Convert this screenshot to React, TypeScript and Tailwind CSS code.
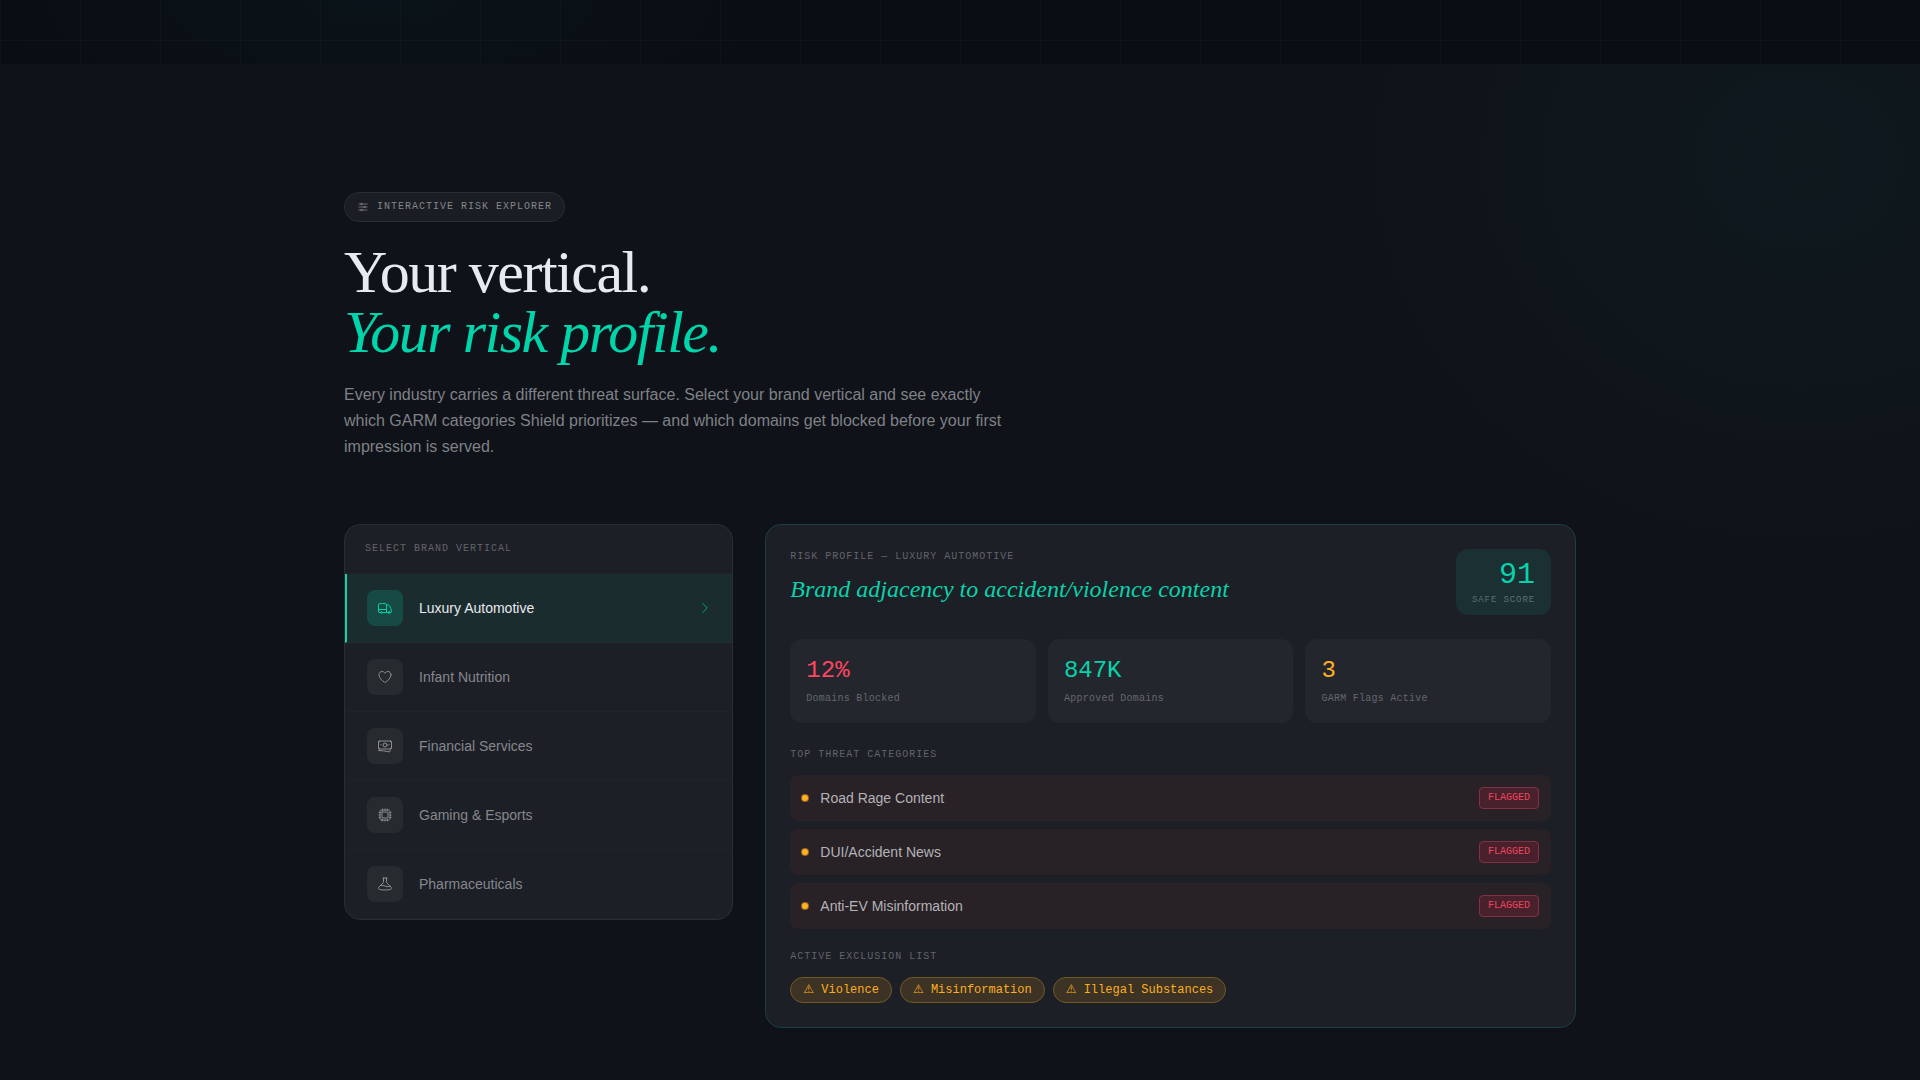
import { useState } from 'react'
import type { ComponentType, SVGProps } from 'react'
import {
    HiOutlineAdjustmentsHorizontal,
    HiOutlineBanknotes,
    HiOutlineBeaker,
    HiOutlineChevronRight,
    HiOutlineCpuChip,
    HiOutlineHeart,
    HiOutlineTruck
} from 'react-icons/hi2'

type Vertical = {
    name: string
    icon: ComponentType<SVGProps<SVGSVGElement>>
    headline: string
    score: number
    blocked: string
    approved: string
    threats: string[]
    exclusions: string[]
}

const verticals: Vertical[] = [
    {
        name: 'Luxury Automotive',
        icon: HiOutlineTruck,
        headline: 'Brand adjacency to accident/violence content',
        score: 91,
        blocked: '12%',
        approved: '847K',
        threats: ['Road Rage Content', 'DUI/Accident News', 'Anti-EV Misinformation'],
        exclusions: ['Violence', 'Misinformation', 'Illegal Substances']
    },
    {
        name: 'Infant Nutrition',
        icon: HiOutlineHeart,
        headline: 'Health misinformation near parenting content',
        score: 96,
        blocked: '18%',
        approved: '612K',
        threats: ['Anti-Vaccine Content', 'Unsafe Feeding Advice', 'Product Recall Rumors'],
        exclusions: ['Misinformation', 'Adult Content', 'Violence']
    },
    {
        name: 'Financial Services',
        icon: HiOutlineBanknotes,
        headline: 'Placement beside scams and fraud schemes',
        score: 93,
        blocked: '15%',
        approved: '734K',
        threats: ['Crypto Scam Content', 'Get-Rich-Quick Schemes', 'Bank Run Rumors'],
        exclusions: ['Spam', 'Misinformation', 'Piracy']
    },
    {
        name: 'Gaming & Esports',
        icon: HiOutlineCpuChip,
        headline: 'Exposure to toxic community content',
        score: 87,
        blocked: '21%',
        approved: '568K',
        threats: ['Hate Speech Streams', 'Cheat Marketplaces', 'Illegal Gambling'],
        exclusions: ['Hate Speech', 'Piracy', 'Obscenity']
    },
    {
        name: 'Pharmaceuticals',
        icon: HiOutlineBeaker,
        headline: 'Adjacency to unverified medical claims',
        score: 94,
        blocked: '16%',
        approved: '693K',
        threats: ['Miracle Cure Content', 'Drug Abuse News', 'Counterfeit Pharmacies'],
        exclusions: ['Illegal Substances', 'Misinformation', 'Spam']
    }
]

const mono = "font-['Liberation_Mono','DejaVu_Sans',monospace]"
const serif = "font-['Liberation_Serif',serif]"

const SectionLabel = ({ children }: { children: React.ReactNode }) => (
    <h3 className={`${mono} text-[10px] leading-4 tracking-[0.1em] uppercase text-[#62646a]`}>{children}</h3>
)

const Stat = ({ value, label, color }: { value: string; label: string; color: string }) => (
    <div className="rounded-xl bg-[#23262d] p-4">
        <div className={`${mono} text-2xl ${color}`}>{value}</div>
        <div className={`${mono} mt-1 text-[10px] leading-4 tracking-wide text-[#65676c]`}>{label}</div>
    </div>
)

const VerticalRow = ({ item, active, onSelect }: { item: Vertical; active: boolean; onSelect: () => void }) => {
    const Icon = item.icon
    return (
        <button
            onClick={onSelect}
            aria-pressed={active}
            className={`flex w-full items-center gap-4 border-b border-l-2 border-b-white/2 px-5 py-4 text-left ${active ? 'border-l-[#1fcda8] bg-[#1b2c2f]' : 'border-l-transparent'}`}
        >
            <span className={`flex size-9 shrink-0 items-center justify-center rounded-lg ${active ? 'bg-[#174a44] text-[#00d4aa]' : 'bg-[#272a2f] text-[#8b8d91]'}`}>
                <Icon className="size-4" />
            </span>
            <span className={`flex-1 text-sm ${active ? 'text-[#e8eaf0]' : 'text-[#85878c]'}`}>{item.name}</span>
            {active && <HiOutlineChevronRight className="size-3.5 text-[#00d4aa]/80" />}
        </button>
    )
}

const RiskPanel = ({ item }: { item: Vertical }) => (
    <div className="rounded-2xl border border-[#1b4043] bg-[#1c1f26] p-6 lg:col-span-8">
        <div className="mb-6 flex items-start justify-between gap-4">
            <div>
                <SectionLabel>Risk Profile — {item.name}</SectionLabel>
                <p className={`${serif} mt-2 text-2xl italic text-[#0bd2aa]`}>{item.headline}</p>
            </div>
            <div className="shrink-0 rounded-xl bg-[#1a3032] px-4 py-2 text-right">
                <div className={`${mono} text-3xl text-[#08d2a9]`}>{item.score}</div>
                <div className={`${mono} text-[9px] leading-[14px] tracking-[0.1em] uppercase text-[#5d7071]`}>Safe Score</div>
            </div>
        </div>

        <div className="mb-6 grid grid-cols-3 gap-3">
            <Stat value={item.blocked} label="Domains Blocked" color="text-[#ff4560]" />
            <Stat value={item.approved} label="Approved Domains" color="text-[#08d2a9]" />
            <Stat value={String(item.exclusions.length)} label="GARM Flags Active" color="text-[#ffb020]" />
        </div>

        <SectionLabel>Top Threat Categories</SectionLabel>
        <ul className="mt-3 mb-5 flex flex-col gap-2">
            {item.threats.map(threat => (
                <li key={threat} className="flex items-center gap-3 rounded-lg bg-[#282126] p-3">
                    <span className="size-1.5 rounded-full bg-[#ffb020] ring-1 ring-[#ffb020]/50" />
                    <span className="flex-1 text-sm text-[#b4b3b7]">{threat}</span>
                    <span className={`${mono} rounded-sm border border-[#803044] bg-[#48212c] px-2 py-0.5 text-[10px] leading-4 text-[#f0445e]`}>FLAGGED</span>
                </li>
            ))}
        </ul>

        <SectionLabel>Active Exclusion List</SectionLabel>
        <ul className="mt-3 flex flex-wrap gap-2">
            {item.exclusions.map(name => (
                <li key={name} className={`${mono} rounded-full border border-[#745825] bg-[#3c3325] px-3 py-1 text-xs text-[#fbae22]`}>⚠ {name}</li>
            ))}
        </ul>
    </div>
)

export default function App() {
    const [selected, setSelected] = useState(0)

    return (
        <div className="min-h-screen bg-[#0f1219] font-['Liberation_Sans',sans-serif] text-[#e8eaf2]">
            {/* tail of the hero, with its grid pattern */}
            <div className="h-16 bg-[#0a0d14] bg-[linear-gradient(to_right,rgba(255,255,255,0.025)_1px,transparent_1px),linear-gradient(to_bottom,rgba(255,255,255,0.025)_1px,transparent_1px),radial-gradient(400px_140px_at_380px_0px,rgba(0,212,170,0.03),transparent)] bg-[size:80px_80px,80px_80px,100%_100%] bg-[position:0_0,0_40px,0_0]" />

            <section className="bg-[radial-gradient(450px_400px_at_calc(100%-120px)_96px,rgba(0,212,170,0.034),rgba(0,212,170,0.024)_45%,transparent)] py-32 pb-13">
                <div className="mx-auto max-w-7xl px-6">
                    <div className="mb-16 flex flex-col items-start gap-5">
                        <div className="flex items-center gap-2 rounded-full border border-[#2a2d34] bg-[#1a1d24] px-3 py-1.5 text-[#85878b]">
                            <HiOutlineAdjustmentsHorizontal className="size-3" />
                            <span className={`${mono} text-[10px] leading-4 tracking-[0.1em] uppercase`}>Interactive Risk Explorer</span>
                        </div>
                        <h2 className={`${serif} text-6xl tracking-tight`}>
                            Your vertical.
                            <br />
                            <em className="text-[#00d4aa]">Your risk profile.</em>
                        </h2>
                        <p className="max-w-2xl leading-[26px] text-[#7f8186]">
                            Every industry carries a different threat surface. Select your brand vertical and see exactly which GARM categories Shield prioritizes — and which domains get blocked before your first impression is served.
                        </p>
                    </div>

                    <div className="grid items-start gap-8 lg:grid-cols-12">
                        <div className="overflow-hidden rounded-2xl border border-[#2a2d34] bg-[#1c1f26] lg:col-span-4">
                            <div className="border-b border-white/2 px-5 py-4">
                                <SectionLabel>Select Brand Vertical</SectionLabel>
                            </div>
                            {verticals.map((item, i) => (
                                <VerticalRow key={item.name} item={item} active={i === selected} onSelect={() => setSelected(i)} />
                            ))}
                        </div>
                        <RiskPanel item={verticals[selected]} />
                    </div>
                </div>
            </section>
        </div>
    )
}
